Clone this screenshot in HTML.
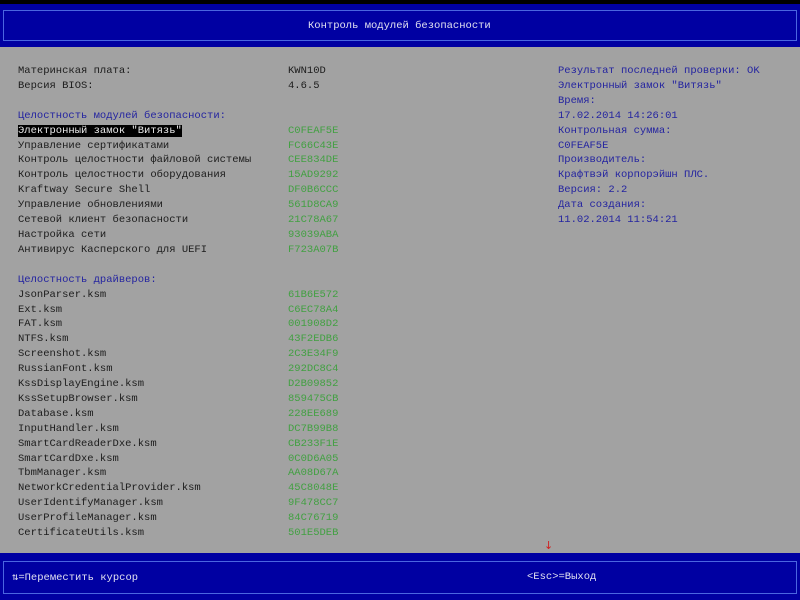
<!DOCTYPE html>
<html><head><meta charset="utf-8"><style>
html,body{margin:0;padding:0;width:800px;height:600px;overflow:hidden;background:#a2a2a2;}
body{position:relative;font-family:"Liberation Mono","DejaVu Sans Mono",monospace;font-size:10.5px;}
.bar{position:absolute;left:0;width:800px;background:#0000a2;}
.in{position:absolute;left:3px;right:3px;border:1px solid #4a66e0;}
pre{position:absolute;margin:0;font:inherit;line-height:14.9px;white-space:pre;}
.k{color:#1c1c1c}.b{color:#2424a0}.g{color:#42a042}
.hl{background:#000;color:#e8e8e8;}
.w{color:#e0e0f0;position:absolute;}
</style></head><body>
<div style="position:absolute;left:0;top:0;width:800px;height:4px;background:#000"></div>
<div class="bar" style="top:4px;height:43px"><div class="in" style="top:6px;height:29px"></div></div>
<div class="w" style="left:308px;top:20px">Контроль модулей безопасности</div>

<pre class="k" style="left:18px;top:64px">Материнская плата:
Версия BIOS:

<span class="b">Целостность модулей безопасности:</span>
<span class="hl">Электронный замок "Витязь"</span>
Управление сертификатами
Контроль целостности файловой системы
Контроль целостности оборудования
Kraftway Secure Shell
Управление обновлениями
Сетевой клиент безопасности
Настройка сети
Антивирус Касперского для UEFI

<span class="b">Целостность драйверов:</span>
JsonParser.ksm
Ext.ksm
FAT.ksm
NTFS.ksm
Screenshot.ksm
RussianFont.ksm
KssDisplayEngine.ksm
KssSetupBrowser.ksm
Database.ksm
InputHandler.ksm
SmartCardReaderDxe.ksm
SmartCardDxe.ksm
TbmManager.ksm
NetworkCredentialProvider.ksm
UserIdentifyManager.ksm
UserProfileManager.ksm
CertificateUtils.ksm</pre>
<pre class="k" style="left:288px;top:64px">KWN10D
4.6.5

<span class="g">
C0FEAF5E
FC66C43E
CEE834DE
15AD9292
DF0B6CCC
561D8CA9
21C78A67
93039ABA
F723A07B


61B6E572
C6EC78A4
001908D2
43F2EDB6
2C3E34F9
292DC8C4
D2B09852
859475CB
228EE689
DC7B99B8
CB233F1E
0C0D6A05
AA08D67A
45C8048E
9F478CC7
84C76719
501E5DEB</span></pre>
<pre class="b" style="left:558px;top:64px">Результат последней проверки: OK
Электронный замок "Витязь"
Время:
17.02.2014 14:26:01
Контрольная сумма:
C0FEAF5E
Производитель:
Крафтвэй корпорэйшн ПЛС.
Версия: 2.2
Дата создания:
11.02.2014 11:54:21</pre>
<div style="position:absolute;left:544px;top:539px;color:#d02020;font-size:11px;font-family:'DejaVu Sans',sans-serif">↓</div>

<div class="bar" style="top:553px;height:47px"><div class="in" style="top:8px;height:31px"></div></div>
<div class="w" style="left:12px;top:571px">⇅=Переместить курсор</div>
<div class="w" style="left:527px;top:571px">&lt;Esc&gt;=Выход</div>
</body></html>
